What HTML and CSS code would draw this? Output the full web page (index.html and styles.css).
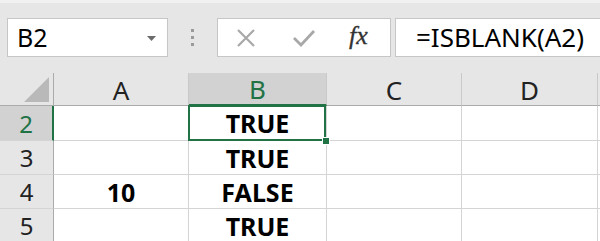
FILE: index.html
```html
<!DOCTYPE html>
<html>
<head>
<meta charset="utf-8">
<link rel="stylesheet" href="styles.css">
</head>
<body>
<div class="toolbar">
  <div class="namebox">
    <span class="name">B2</span>
    <svg class="caret" width="9" height="5" viewBox="0 0 9 5"><path d="M0 0H9L4.5 5Z" fill="#6b6b6b"/></svg>
  </div>
  <div class="dots"><i></i><i></i><i></i></div>
  <div class="fbuttons">
    <svg class="icon-x" width="20" height="18" viewBox="0 0 20 18"><path d="M2 1L18 17M18 1L2 17" stroke="#a8a8a8" stroke-width="2.2" fill="none"/></svg>
    <svg class="icon-check" width="24" height="18" viewBox="0 0 24 18"><path d="M2 9L9 16L22 2" stroke="#a8a8a8" stroke-width="2.8" fill="none"/></svg>
    <span class="fx">fx</span>
  </div>
  <div class="formula">=ISBLANK(A2)</div>
</div>
<div class="sheet">
  <div class="hd corner"><svg width="26" height="25" viewBox="0 0 26 25"><path d="M25 0V25H0Z" fill="#b9b9b9"/></svg></div>
  <div class="hd col">A</div>
  <div class="hd col active-col">B</div>
  <div class="hd col">C</div>
  <div class="hd col">D</div>
  <div class="hd col last"></div>

  <div class="hd row active-row">2</div>
  <div class="cell"></div>
  <div class="cell b selected">TRUE<span class="sel"></span><span class="handle"></span></div>
  <div class="cell"></div>
  <div class="cell"></div>
  <div class="cell last"></div>

  <div class="hd row">3</div>
  <div class="cell"></div>
  <div class="cell b">TRUE</div>
  <div class="cell"></div>
  <div class="cell"></div>
  <div class="cell last"></div>

  <div class="hd row">4</div>
  <div class="cell b">10</div>
  <div class="cell b">FALSE</div>
  <div class="cell"></div>
  <div class="cell"></div>
  <div class="cell last"></div>

  <div class="hd row">5</div>
  <div class="cell"></div>
  <div class="cell b">TRUE</div>
  <div class="cell"></div>
  <div class="cell"></div>
  <div class="cell last"></div>
</div>
</body>
</html>
```
FILE: styles.css
```css
* { box-sizing: border-box; }
html, body { margin: 0; padding: 0; }
body {
  width: 600px;
  height: 241px;
  overflow: hidden;
  background: #ffffff;
  font-family: "Noto Sans", "Open Sans", sans-serif;
  color: #000;
}
.toolbar {
  height: 73px;
  background: #e6e6e6;
  border-top: 3px solid #f1f1f1;
  display: flex;
  align-items: flex-start;
  padding-top: 15px;
  padding-left: 7px;
}
.namebox {
  width: 161px;
  height: 39px;
  background: #fff;
  border: 1px solid #c6c6c6;
  display: flex;
  align-items: center;
  justify-content: space-between;
  padding: 0 11px 0 9px;
}
.name {
  font-size: 25px;
  line-height: 1;
  margin-top: -1px;
}
.caret { margin-top: 1px; }
.dots {
  width: 49px;
  height: 39px;
  display: flex;
  flex-direction: column;
  align-items: center;
  justify-content: center;
  gap: 4px;
}
.dots i {
  display: block;
  width: 3px;
  height: 3px;
  background: #9a9a9a;
}
.fbuttons {
  width: 174px;
  height: 39px;
  background: #fff;
  border: 1px solid #c6c6c6;
  display: flex;
  align-items: center;
  padding-left: 18px;
}
.icon-x { margin-right: 36px; }
.icon-check { margin-right: 33px; }
.fx {
  font-family: "Liberation Serif", "DejaVu Serif", serif;
  font-style: italic;
  font-size: 26px;
  color: #333;
  line-height: 1;
  margin-top: -3px;
  -webkit-text-stroke: 0.3px #333;
}
.formula {
  margin-left: 4px;
  flex: 1;
  height: 39px;
  background: #fff;
  border: 1px solid #c6c6c6;
  border-right: none;
  font-size: 26px;
  line-height: 37px;
  padding-left: 20px;
}
.sheet {
  display: grid;
  grid-template-columns: 54px 135px 138px 135px 136px 1fr;
  grid-template-rows: 33px 35px 34px 34px 34px;
}
.hd {
  background: #e6e6e6;
  border-right: 1px solid #c9c9c9;
  border-bottom: 1px solid #ababab;
  display: flex;
  align-items: center;
  justify-content: center;
  color: #222;
}
.col { font-size: 26px; padding-top: 1px; }
.col.last { border-right: none; }
.corner {
  border-right: 1px solid #ababab;
  justify-content: flex-end;
  align-items: flex-end;
  padding: 0 3px 3px 0;
}
.row {
  font-size: 24px;
  border-right: 1px solid #ababab;
  border-bottom: 1px solid #d4d4d4;
}
.active-col {
  background: #d2d2d2;
  color: #217346;
  border-bottom: 2px solid #217346;
}
.active-row {
  background: #d2d2d2;
  color: #217346;
  border-right: 2px solid #217346;
}
.cell {
  border-right: 1px solid #d4d4d4;
  border-bottom: 1px solid #d4d4d4;
  display: flex;
  align-items: center;
  justify-content: center;
  font-size: 25px;
  font-weight: bold;
  position: relative;
}
.cell.last { border-right: none; }
.selected { z-index: 2; }
.sel {
  position: absolute;
  left: -1px;
  top: -1px;
  right: 0;
  bottom: -1px;
  border: 2px solid #217346;
}
.handle {
  position: absolute;
  z-index: 3;
  right: -4px;
  bottom: -5px;
  width: 8px;
  height: 8px;
  background: #217346;
  border: 1px solid #fff;
}
```
